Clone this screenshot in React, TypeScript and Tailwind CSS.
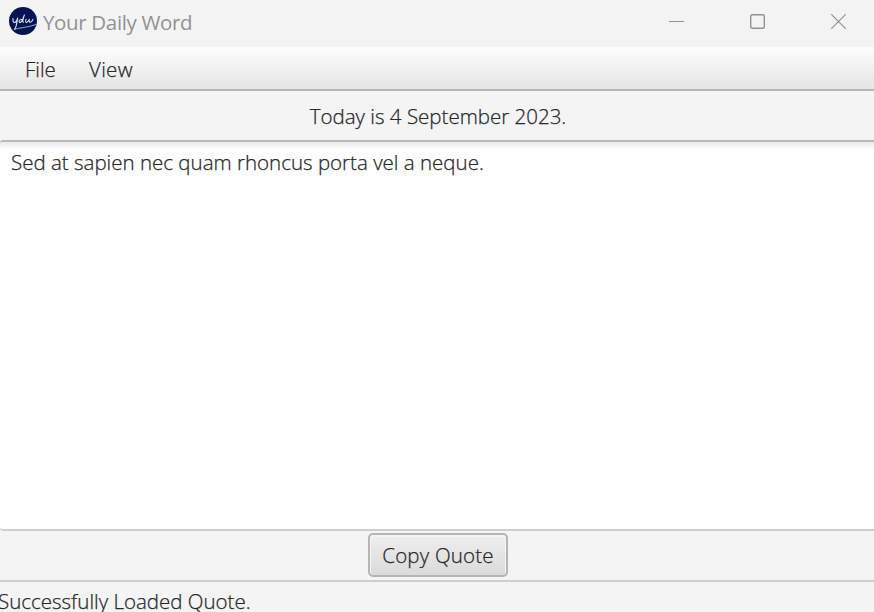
function AppLogo() {
  return (
    <svg width="28" height="28" viewBox="0 0 28 28" fill="none" className="shrink-0">
      <circle cx="14" cy="14" r="14" fill="#051553" />
      <g stroke="#dfe2ea" strokeWidth="1.1" strokeLinecap="round" strokeLinejoin="round">
        <path d="M4 11.5C3.8 14 4.2 15.6 5.5 15.5C7 15.3 8 13.4 8.6 11C8 15.5 7.4 20.6 5.5 22.3" />
        <path d="M13.4 12.7C11 11.9 9.9 13.3 10.2 14.8C10.6 16.4 12.6 15 13.4 13L15.4 8C14 11.5 13.2 15 14.4 15.4" />
        <path d="M17 12.3C16.3 14.5 16.7 16 18 15.3C19.4 14.5 20 13 20.3 12.3C19.9 14.4 20.4 15.7 21.8 15C23.3 14.2 23.9 13 24 12.2" />
        <path d="M5.5 22.3C11 20.5 18 20.8 27 17.5" strokeWidth=".7" />
      </g>
    </svg>
  );
}

export default function App() {
  return (
    <div className="flex h-[612px] w-[874px] flex-col overflow-hidden bg-[#f4f4f4] font-['Open_Sans','Noto_Sans',sans-serif] text-[20.5px] leading-[28px] font-light whitespace-nowrap text-[#282828] [-webkit-text-stroke:0.25px_#282828]">
      <header className="flex h-[47px] shrink-0 items-start bg-[#f3f3f3] pt-[7px] pl-[9px]">
        <AppLogo />
        <h1 className="mt-[1px] ml-[6px] text-[20.5px] font-normal tracking-[-0.35px] text-[#929292] [-webkit-text-stroke:0]">Your Daily Word</h1>
        <div className="mt-[7px] mr-[28px] ml-auto flex gap-[66px]">
          <svg width="15" height="15" fill="none" stroke="#929292"><path d="M0 7.5H15" /></svg>
          <svg width="15" height="15" fill="none" stroke="#929292" strokeWidth="1.4"><rect x=".7" y=".7" width="13.6" height="13.6" rx="1.5" /></svg>
          <svg width="15" height="15" fill="none" stroke="#929292" strokeWidth="1.2"><path d="M.3.3L14.7 14.7M14.7.3L.3 14.7" /></svg>
        </div>
      </header>
      <nav className="flex h-[44px] shrink-0 items-start border-b-2 border-[#b5b5b5] bg-linear-to-b from-[#fdfdfd] to-[#e5e5e5] pt-[8px] pl-[25px]">
        <span className="w-[64px]">File</span>
        <span className="tracking-[0.3px]">View</span>
      </nav>
      <div className="flex h-[49px] shrink-0 justify-center pt-[11px] pl-[2px]">
        <span>Today is 4 September 2023.</span>
      </div>
      <main className="h-[391px] shrink-0 rounded-l-[3px] border-t-2 border-b-2 border-t-[#b9b9b9] border-b-[#cecece] bg-[#fefefe] bg-linear-to-b from-[#e9e9e9] to-[#fefefe] to-[7px] pt-[6px] pl-[11px]">
        <p>Sed at sapien nec quam rhoncus porta vel a neque.</p>
      </main>
      <div className="flex h-[51px] shrink-0 justify-center border-b-2 border-[#cecece] pt-[2px] pl-[2px]">
        <button className="h-[44px] w-[140px] rounded-[5px] border-2 border-[#b5b5b5] bg-linear-to-b from-[#efefef] to-[#dadada] pb-[1px] tracking-[0.2px] shadow-[inset_0_1px_0_1px_#f5f5f5]">Copy Quote</button>
      </div>
      <footer className="-ml-[2px] pt-[5px]">Successfully Loaded Quote.</footer>
    </div>
  );
}
